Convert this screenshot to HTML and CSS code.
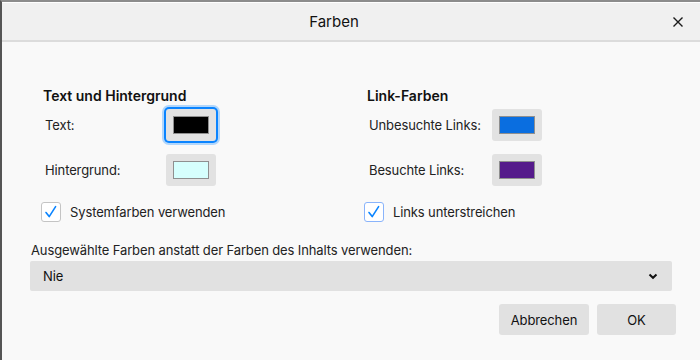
FILE: index.html
```html
<!DOCTYPE HTML>
<html>
<head>
<title>Farben</title>
<link rel="stylesheet" href="styles.css">
</head>
<body>
<div class="dialog">
	<div class="dlg-head">
		<div class="dlg-title">Farben</div>
		<div class="dlg-close">
			<svg width="12" height="12" viewBox="0 0 12 12"><path d="M1.5 1.5L10.5 10.5M10.5 1.5L1.5 10.5" stroke="#1a1a1a" stroke-width="1.4" fill="none"/></svg>
		</div>
	</div>
	<div class="dlg-body">
		<div class="cols">
			<div class="col">
				<div class="col-title">Text und Hintergrund</div>
				<div class="crow">
					<span class="clabel">Text:</span>
					<span class="cbtn focus"><span class="swatch" style="background:#000000;"></span></span>
				</div>
				<div class="crow">
					<span class="clabel">Hintergrund:</span>
					<span class="cbtn"><span class="swatch" style="background:#d6fffd;"></span></span>
				</div>
				<div class="chk-row">
					<span class="chk"><svg width="20" height="20" viewBox="0 0 20 20"><path d="M5 10.5L8.2 14.6L14.6 4.6" stroke="#0a84ff" stroke-width="1.6" fill="none" stroke-linecap="round" stroke-linejoin="round"/></svg></span>
					<span>Systemfarben verwenden</span>
				</div>
			</div>
			<div class="col right">
				<div class="col-title">Link-Farben</div>
				<div class="crow">
					<span class="clabel">Unbesuchte Links:</span>
					<span class="cbtn"><span class="swatch" style="background:#0a6ee0;"></span></span>
				</div>
				<div class="crow">
					<span class="clabel">Besuchte Links:</span>
					<span class="cbtn"><span class="swatch" style="background:#551a8b;"></span></span>
				</div>
				<div class="chk-row">
					<span class="chk blue"><svg width="20" height="20" viewBox="0 0 20 20"><path d="M5 10.5L8.2 14.6L14.6 4.6" stroke="#0a84ff" stroke-width="1.6" fill="none" stroke-linecap="round" stroke-linejoin="round"/></svg></span>
					<span>Links unterstreichen</span>
				</div>
			</div>
		</div>
		<div class="sel-label">Ausgewählte Farben anstatt der Farben des Inhalts verwenden:</div>
		<div class="select">
			<span>Nie</span>
			<svg width="10" height="8" viewBox="0 0 10 8"><path d="M1.5 2.5L5 5.8L8.5 2.5" stroke="#111" stroke-width="2" fill="none"/></svg>
		</div>
		<div class="btns">
			<button class="dbtn">Abbrechen</button>
			<button class="dbtn ok">OK</button>
		</div>
	</div>
</div>
</body>
</html>
```

FILE: styles.css
```css
body{
	margin: 0;
	font-family: Inter, "Noto Sans", sans-serif;
	font-size: 13px;
	letter-spacing: -0.12px;
	color: #222222;
	background: #f9f9f9;
}
.dialog{
	height: 358px;
	border-top: 2px solid #8c8c8c;
	border-left: 2px solid #555555;
	background: #f9f9f9;
}
.dlg-head{
	display: flex;
	align-items: center;
	height: 37px;
	border-top: 1px solid #ffffff;
	border-bottom: 2px solid #dcdcdc;
	background: #f0f0f0;
}
.dlg-title{
	flex: 1;
	text-align: center;
	font-size: 15px;
	letter-spacing: 0;
	color: #111111;
}
.dlg-close{
	width: 24px;
	margin-right: 10px;
	display: flex;
	justify-content: center;
}
.dlg-body{
	padding: 45px 0 0 28px;
}
.cols{
	display: flex;
}
.col{
	width: 324px;
	padding-left: 13px;
}
.col.right{
	padding-left: 0;
}
.col-title{
	font-size: 14px;
	font-weight: 600;
	letter-spacing: 0;
	color: #111111;
	line-height: 18px;
	margin-bottom: 4px;
}
.crow{
	display: flex;
	align-items: center;
	height: 32px;
	margin-bottom: 13px;
}
.clabel{
	width: 121px;
	padding-left: 2px;
}
.right .clabel{
	width: 123px;
}
.cbtn{
	display: flex;
	align-items: center;
	justify-content: center;
	width: 50px;
	height: 32px;
	border-radius: 3px;
	background: #e2e2e2;
	box-sizing: border-box;
}
.cbtn.focus{
	box-shadow: 0 0 0 2px #0a84ff, 0 0 0 4px rgba(10,132,255,0.3);
}
.swatch{
	width: 34px;
	height: 16px;
	border: 1px solid #8f8f8f;
}
.chk-row{
	display: flex;
	align-items: center;
	margin: 16px 0 0 -2px;
	height: 20px;
}
.right .chk-row{
	margin-left: -3px;
}
.chk{
	width: 20px;
	height: 20px;
	box-sizing: border-box;
	border: 1px solid #c4c4c4;
	border-radius: 3px;
	background: #ffffff;
	margin-right: 9px;
	display: flex;
	align-items: center;
	justify-content: center;
}
.chk svg{
	margin: -1px;
}
.chk.blue{
	border-color: #8ab4fb;
}
.sel-label{
	margin: 20px 0 0 1px;
	line-height: 16px;
}
.select{
	display: flex;
	align-items: center;
	justify-content: space-between;
	width: 642px;
	height: 30px;
	margin-top: 3px;
	padding: 0 14px 0 13px;
	box-sizing: border-box;
	background: #e1e1e1;
	border-radius: 2px;
	color: #111111;
}
.btns{
	display: flex;
	justify-content: flex-end;
	gap: 8px;
	width: 646px;
	margin-top: 13px;
}
.dbtn{
	height: 31px;
	border: none;
	border-radius: 3px;
	background: #e1e1e1;
	font-family: Inter, "Noto Sans", sans-serif;
	font-size: 13px;
	letter-spacing: -0.12px;
	color: #111111;
	padding: 0;
	width: 90px;
}
.dbtn.ok{
	width: 79px;
}
```
